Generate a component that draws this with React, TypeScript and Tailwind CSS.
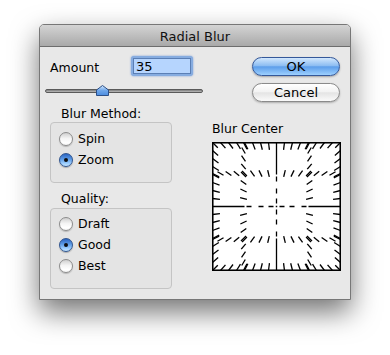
import React from "react";

const S = 129;
const C = S / 2;

function buildPattern() {
  const pts = new Map<string, { x: number; y: number; edge: boolean }>();
  const us = [-64, -33, 33, 64];
  const vs: number[] = [];
  for (let v = -64; v <= 64; v += 8) if (v !== 0) vs.push(v);
  for (const u of us) {
    for (const v of vs) {
      const a = { x: u, y: v };
      const b = { x: v, y: u };
      for (const p of [a, b]) {
        const key = `${p.x},${p.y}`;
        const edge = Math.abs(p.x) === 64 || Math.abs(p.y) === 64;
        if (!pts.has(key)) pts.set(key, { ...p, edge });
      }
    }
  }
  const segs: { x1: number; y1: number; x2: number; y2: number }[] = [];
  pts.forEach((p) => {
    const len = Math.hypot(p.x, p.y);
    const dx = -p.x / len;
    const dy = -p.y / len;
    if (p.edge) {
      const L = 7.5;
      segs.push({ x1: C + p.x, y1: C + p.y, x2: C + p.x + dx * L, y2: C + p.y + dy * L });
    } else {
      const L = 7;
      segs.push({
        x1: C + p.x - (dx * L) / 2,
        y1: C + p.y - (dy * L) / 2,
        x2: C + p.x + (dx * L) / 2,
        y2: C + p.y + (dy * L) / 2,
      });
    }
  });
  const dirs = [
    [1, 0],
    [-1, 0],
    [0, 1],
    [0, -1],
  ];
  for (const [ax, ay] of dirs) {
    segs.push({ x1: C + ax * 64, y1: C + ay * 64, x2: C + ax * 32, y2: C + ay * 32 });
    for (const [r1, r2] of [
      [30, 25],
      [18, 13],
      [8, 3],
    ]) {
      segs.push({ x1: C + ax * r1, y1: C + ay * r1, x2: C + ax * r2, y2: C + ay * r2 });
    }
  }
  return segs;
}

const SEGS = buildPattern();

function BlurCenter() {
  return (
    <svg width={S} height={S} viewBox={`0 0 ${S} ${S}`} className="block bg-white">
      {SEGS.map((s, i) => (
        <line key={i} x1={s.x1} y1={s.y1} x2={s.x2} y2={s.y2} stroke="#000" strokeWidth={1.3} />
      ))}
      <rect x={0.75} y={0.75} width={S - 1.5} height={S - 1.5} fill="none" stroke="#000" strokeWidth={1.6} />
      <rect x={C - 0.75} y={C - 0.75} width={1.5} height={1.5} fill="#000" />
    </svg>
  );
}

function Radio({ checked, label }: { checked?: boolean; label: string }) {
  return (
    <div className="flex items-center h-[21px]">
      <span
        className={
          checked
            ? "w-[14px] h-[14px] rounded-full border border-[#2f548f] bg-[linear-gradient(to_bottom,#2a64c2,#5f9de6_45%,#9fd0ff_80%,#c6e6ff)] flex items-center justify-center shadow-[0_1px_1px_rgba(0,0,0,0.25)]"
            : "w-[14px] h-[14px] rounded-full border border-[#8c8c8c] bg-[linear-gradient(to_bottom,#cfcfcf,#f4f4f4_45%,#ffffff_80%,#f6f6f6)] flex items-center justify-center shadow-[0_1px_1px_rgba(0,0,0,0.2)]"
        }
      >
        {checked && <span className="w-[4px] h-[4px] rounded-full bg-[#0d0d0d]" />}
      </span>
      <span className="ml-[5px]">{label}</span>
    </div>
  );
}

export default function App() {
  return (
    <div className="w-[390px] h-[355px] bg-white pt-[24px] pl-[39px] font-['DejaVu_Sans',sans-serif] text-[12.5px] text-black leading-[15px]">
      <div className="w-[312px] h-[276px] rounded-t-[5px] border border-[#777777] bg-[#e8e8e8] shadow-[0_12px_28px_rgba(0,0,0,0.55)] flex flex-col overflow-hidden">
        <div className="h-[22px] shrink-0 border-b border-[#6d6d6d] bg-linear-to-b from-[#d4d4d4] to-[#a9a9a9] flex items-center justify-center text-[13px] text-[#111] pt-[1px]">
          Radial Blur
        </div>
        <div className="flex flex-1">
          {/* left column */}
          <div className="w-[172px] shrink-0 flex flex-col">
            <div className="mt-[9px] h-[20px] flex items-center">
              <span className="ml-[10px] w-[81px] pt-[3px]">Amount</span>
              <div className="w-[62px] h-[20px] rounded-[3px] bg-[#86ace0] p-[2px] shadow-[0_0_2px_rgba(80,130,210,0.8)]">
                <div className="w-full h-full bg-[#b6d5fe] border border-[#5b7fb5] flex items-center pl-[2px] text-[13px]">
                  35
                </div>
              </div>
            </div>
            <div className="mt-[9px] h-[10px] ml-[5px] w-[158px] flex flex-col justify-end relative">
              <div className="h-[4px] mb-[2px] rounded-full border border-[#5a5a5a] bg-linear-to-b from-[#7b7b7b] to-[#bdbdbd]" />
              <svg width="13" height="11" viewBox="0 0 13 11" className="absolute left-[51px] top-0">
                <defs>
                  <linearGradient id="th" x1="0" y1="0" x2="0" y2="1">
                    <stop offset="0" stopColor="#d6ebff" />
                    <stop offset="0.5" stopColor="#6ea6ea" />
                    <stop offset="1" stopColor="#4b8ce0" />
                  </linearGradient>
                </defs>
                <path d="M6.5 0.5 L12.5 5 L12.5 10.5 L0.5 10.5 L0.5 5 Z" fill="url(#th)" stroke="#2c4f87" strokeWidth="1" />
              </svg>
            </div>
            <div className="mt-[11px] ml-[21px]">Blur Method:</div>
            <div className="mt-[1px] ml-[10px] w-[122px] h-[61px] rounded-[4px] border border-[#c4c4c4] bg-[#e4e4e4] pt-[5px] pl-[8px]">
              <Radio label="Spin" />
              <Radio checked label="Zoom" />
            </div>
            <div className="mt-[8px] ml-[21px]">Quality:</div>
            <div className="mt-[2px] ml-[10px] w-[122px] h-[81px] rounded-[4px] border border-[#c4c4c4] bg-[#e4e4e4] pt-[4px] pl-[8px]">
              <Radio label="Draft" />
              <Radio checked label="Good" />
              <Radio label="Best" />
            </div>
          </div>
          {/* right column */}
          <div className="flex flex-col">
            <div className="ml-[40px] mt-[10px] w-[88px] h-[19px] rounded-full border border-[#34589a] bg-[linear-gradient(to_bottom,#d2e7fd,#8dbdf2_45%,#5d9eea_52%,#9dd0ff)] flex items-center justify-center text-[13px] shadow-[0_1px_2px_rgba(0,0,0,0.3)]">
              OK
            </div>
            <div className="ml-[40px] mt-[7px] w-[88px] h-[19px] rounded-full border border-[#8a8a8a] bg-[linear-gradient(to_bottom,#ffffff,#f3f3f3_45%,#e4e4e4_52%,#fafafa)] flex items-center justify-center text-[13px] shadow-[0_1px_2px_rgba(0,0,0,0.25)]">
              Cancel
            </div>
            <div className="mt-[19px]">Blur Center</div>
            <div className="mt-[6px]">
              <BlurCenter />
            </div>
          </div>
        </div>
      </div>
    </div>
  );
}
